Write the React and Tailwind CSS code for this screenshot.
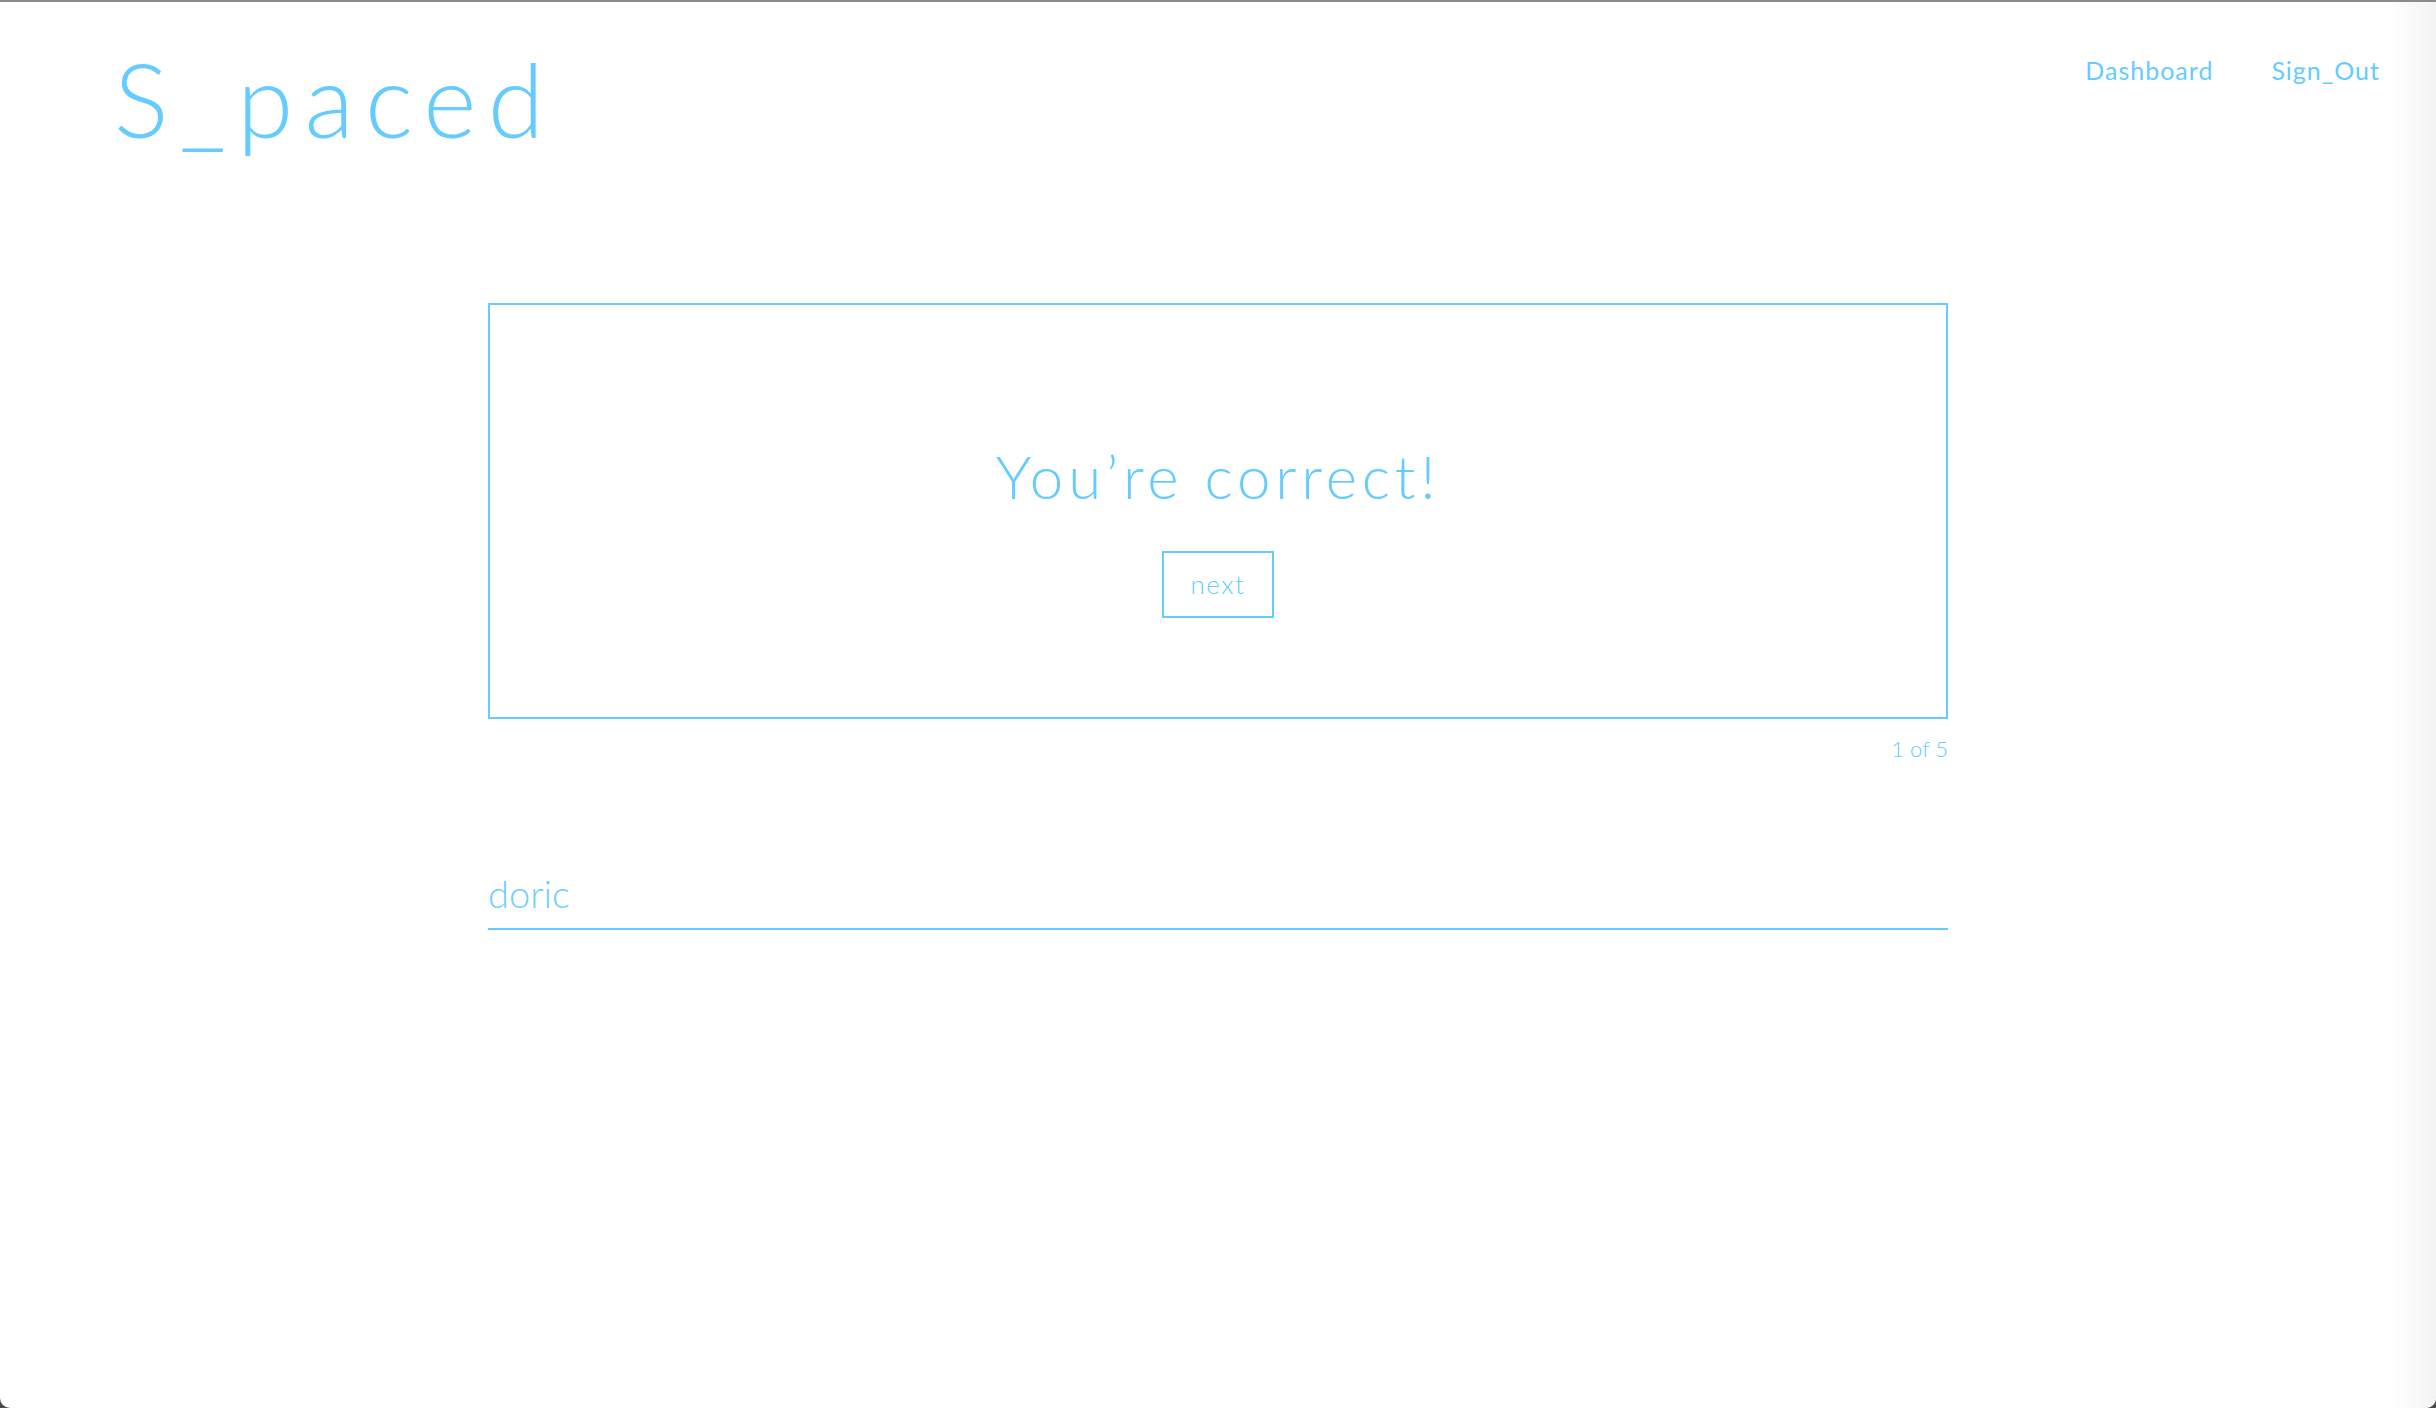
import React from "react";

const NavLink = ({ children }) => (
  <a href="#" className="text-[25px] leading-none tracking-[0.04em] text-[#66ccff]">
    {children}
  </a>
);

export default function App() {
  return (
    <div className="h-[1408px] overflow-hidden bg-[#4a4a4a] font-['Lato',sans-serif]">
      <div className="h-full flex bg-white border-t-2 border-[#8c8c8c] rounded-b-[10px] overflow-hidden">
        <div className="flex-1">
          {/* Header */}
          <header className="flex justify-between items-start pl-[114px] pr-[10px]">
            <h1 className="mt-[46px] text-[102px] leading-none font-light tracking-[0.11em] text-[#66ccff]">
              S_paced
            </h1>
            <nav className="mt-[56px] flex gap-[58px]">
              <NavLink>Dashboard</NavLink>
              <NavLink>Sign_Out</NavLink>
            </nav>
          </header>

          {/* Quiz card */}
          <main className="ml-[488px] w-[1460px] mt-[153px]">
            <div className="h-[416px] border-2 border-[#66ccff] flex flex-col items-center pt-[141px]">
              <h2 className="text-[60px] leading-none font-light tracking-[0.08em] text-[#66ccff]">
                You’re correct!
              </h2>
              <button className="mt-[45px] w-[112px] h-[67px] border-2 border-[#66ccff] text-[26px] font-light tracking-[0.06em] text-[#66ccff]">
                next
              </button>
            </div>
            <p className="mt-[19px] text-right text-[22px] leading-none font-light text-[#66ccff]">
              1 of 5
            </p>

            <div className="mt-[114px] border-b-2 border-[#66ccff] pb-[14px]">
              <input
                readOnly
                defaultValue="doric"
                className="w-full h-[38px] text-[38px] leading-none font-light text-[#6fcfff] outline-none bg-transparent"
              />
            </div>
          </main>
        </div>
        <div className="w-[46px] bg-gradient-to-r from-white to-[#f3f3f3]" />
      </div>
    </div>
  );
}
